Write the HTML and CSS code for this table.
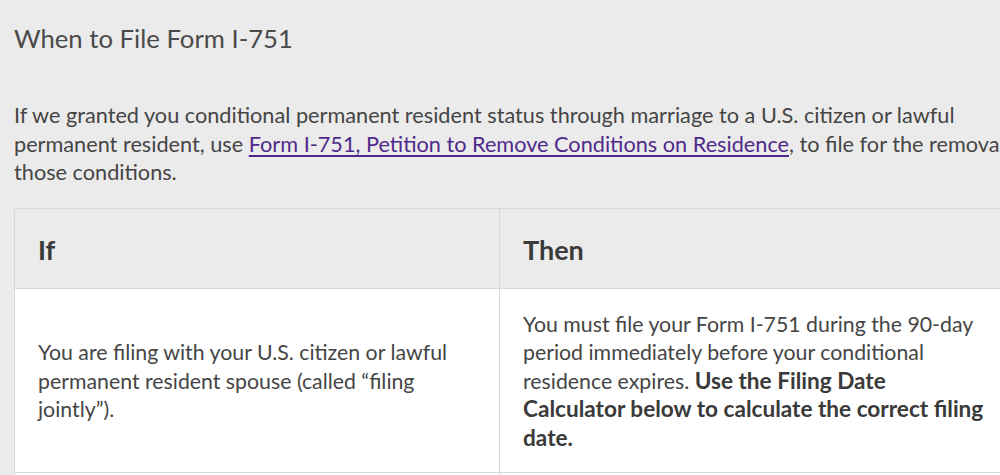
FILE: index.html
```html
<!DOCTYPE html>
<html lang="en">
<head>
<meta charset="utf-8">
<title>When to File Form I-751</title>
<link rel="stylesheet" href="styles.css">
</head>
<body>
<main class="page">
  <h2 class="title">When to File Form I-751</h2>
  <p class="intro">If we granted you conditional permanent resident status through marriage to a U.S. citizen or lawful permanent resident, use <a class="link" href="#">Form I-751, Petition to Remove Conditions on Residence</a>, to file for the removal of those conditions.</p>
  <table class="rules">
    <thead>
      <tr>
        <th class="col-if">If</th>
        <th class="col-then">Then</th>
      </tr>
    </thead>
    <tbody>
      <tr>
        <td class="cell-if">You are filing with your U.S. citizen or lawful permanent resident spouse (called “filing jointly”).</td>
        <td class="cell-then">You must file your Form I-751 during the 90-day period immediately before your conditional residence expires. <strong>Use the Filing Date Calculator below to calculate the correct filing date.</strong></td>
      </tr>
      <tr class="next">
        <td class="cell-if"></td>
        <td class="cell-then"></td>
      </tr>
    </tbody>
  </table>
</main>
</body>
</html>
```

FILE: styles.css
```css
html, body {
  margin: 0;
  padding: 0;
  background: #ebebeb;
  overflow: hidden;
}
body {
  width: 1000px;
  height: 475px;
  font-family: Lato, "Liberation Sans", sans-serif;
  color: #454545;
}
.page {
  width: 1026px;
  padding: 21px 0 0 14px;
}
.title {
  margin: 0;
  font-size: 25.7px;
  line-height: 34px;
  font-weight: 400;
  color: #4a4a4a;
}
.intro {
  margin: 46px 0 0 0;
  font-size: 21.7px;
  line-height: 28.5px;
}
.link {
  color: #4f2a8c;
  text-decoration: underline;
  text-underline-offset: 3px;
}
.rules {
  margin-top: 21px;
  width: 999px;
  border-collapse: collapse;
  table-layout: fixed;
}
.rules th, .rules td {
  box-sizing: border-box;
  border: 1px solid #d8d8d8;
  text-align: left;
  padding: 21px 23px 20px;
  font-size: 21.3px;
  line-height: 28.5px;
}
.rules th {
  background: #ebebeb;
  font-size: 27px;
  line-height: 30px;
  padding: 26px 23px 23px;
  font-weight: 700;
  color: #3a3a3a;
}
.col-if { width: 485px; }
.rules td {
  background: #fff;
  vertical-align: middle;
}
.rules .next td {
  height: 60px;
}
.rules strong {
  font-weight: 700;
  font-size: 22.6px;
  color: #3a3a3a;
}
```
